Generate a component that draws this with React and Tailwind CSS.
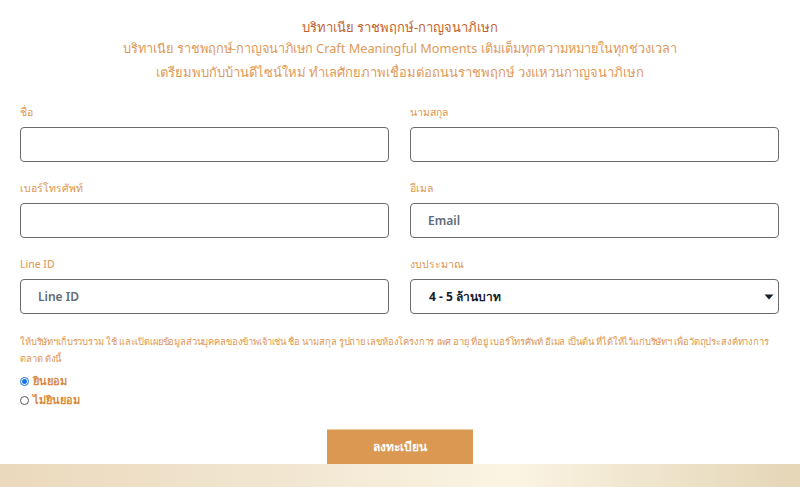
import React from "react";

const font = { fontFamily: '"Noto Sans", "Liberation Sans", sans-serif' };

function Field({ label, placeholder, children }) {
  return (
    <div className="flex flex-col">
      <label className="text-[10.5px] leading-[14px] text-[#e0964f] mb-[8px] h-[14px]">{label}</label>
      {children ? (
        children
      ) : (
        <input
          placeholder={placeholder}
          className="h-[35px] w-full rounded-[4px] border border-[#6b6b6b] bg-white px-[17px] text-[12px] font-semibold text-[#4b5a6b] placeholder:text-[#5d6b7a] outline-none"
          style={font}
        />
      )}
    </div>
  );
}

export default function App() {
  return (
    <div className="w-[800px] h-[487px] bg-white flex flex-col overflow-hidden" style={font}>
      <div className="flex flex-col items-center pt-[18px]">
        <p className="text-[13px] leading-[18px] text-[#c2642b]">บริทาเนีย ราชพฤกษ์-กาญจนาภิเษก</p>
        <p className="text-[12.75px] leading-[24px] text-[#df9a58]">
          บริทาเนีย ราชพฤกษ์-กาญจนาภิเษก Craft Meaningful Moments เติมเต็มทุกความหมายในทุกช่วงเวลา
        </p>
        <p className="text-[13px] leading-[24px] text-[#df9a58]">
          เตรียมพบกับบ้านดีไซน์ใหม่ ทำเลศักยภาพเชื่อมต่อถนนราชพฤกษ์ วงแหวนกาญจนาภิเษก
        </p>
      </div>

      <div className="px-[20px] pr-[21px] mt-[21px] grid grid-cols-2 gap-x-[21px] gap-y-[19px]">
        <Field label="ชื่อ" />
        <Field label="นามสกุล" />
        <Field label="เบอร์โทรศัพท์" />
        <Field label="อีเมล" placeholder="Email" />
        <Field label="Line ID" placeholder="Line ID" />
        <Field label="งบประมาณ">
          <div className="relative h-[35px] w-full rounded-[4px] border border-[#6b6b6b] bg-white flex items-center px-[18px]">
            <span className="text-[12px] font-bold text-[#16202e]">4 - 5 ล้านบาท</span>
            <svg className="absolute right-[4px] top-[14px]" width="10" height="6" viewBox="0 0 10 6">
              <path d="M0.5 0.5 L9.5 0.5 L5 5.5 Z" fill="#16202e" />
            </svg>
          </div>
        </Field>
      </div>

      <div className="px-[20px] mt-[19px]">
        <p className="text-[9.4px] tracking-[-0.15px] leading-[17px] text-[#e0964f] whitespace-nowrap">
          ให้บริษัทฯเก็บรวบรวม ใช้ และเปิดเผยข้อมูลส่วนบุคคลของข้าพเจ้าเช่น ชื่อ นามสกุล รูปถ่าย เลขห้องโครงการ เพศ อายุ ที่อยู่ เบอร์โทรศัพท์ อีเมล เป็นต้น ที่ได้ให้ไว้แก่บริษัทฯ เพื่อวัตถุประสงค์ทางการ
          <br />
          ตลาด ดังนี้
        </p>
        <div className="mt-[5px] flex flex-col gap-[1px]">
          <label className="flex items-center gap-[4px] h-[18px]">
            <span className="w-[9px] h-[9px] rounded-full border border-[#1a73e8] bg-white flex items-center justify-center">
              <span className="w-[5px] h-[5px] rounded-full bg-[#1a73e8]" />
            </span>
            <span className="text-[11px] font-bold text-[#d98a40]">ยินยอม</span>
          </label>
          <label className="flex items-center gap-[4px] h-[18px]">
            <span className="w-[9px] h-[9px] rounded-full border border-[#555] bg-white" />
            <span className="text-[11px] font-bold text-[#d98a40]">ไม่ยินยอม</span>
          </label>
        </div>
      </div>

      <div className="flex justify-center mt-[20px]">
        <button className="w-[146px] h-[35px] bg-[#db9853] border-t border-[#eccaa4] text-white text-[12px] font-bold">
          ลงทะเบียน
        </button>
      </div>
      <div className="flex-1 bg-[linear-gradient(90deg,#ead9bc_0%,#f3e8d4_40%,#fbf4e3_64%,#efe4cc_82%,#e4d6b6_100%)]" />
    </div>
  );
}
